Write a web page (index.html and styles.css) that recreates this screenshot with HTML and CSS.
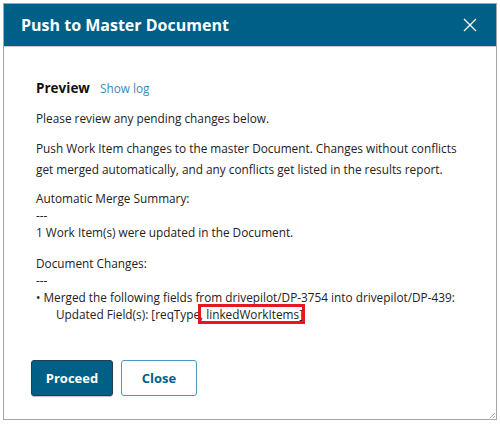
FILE: index.html
```html
<!DOCTYPE html>
<html>
<head>
<meta charset="utf-8">
<link rel="stylesheet" href="styles.css">
</head>
<body>
<div class="dialog">
  <div class="header">
    <div class="title">Push to Master Document</div>
    <svg class="close-x" width="14" height="14" viewBox="0 0 14 14"><path d="M1 1 L13 13 M13 1 L1 13" stroke="#fff" stroke-width="1.3" fill="none"/></svg>
  </div>
  <div class="content">
    <div class="heading"><span class="h-title">Preview</span><span class="link">Show log</span></div>
    <p class="p1">Please review any pending changes below.</p>
    <p class="p2">Push Work Item changes to the master Document. Changes without conflicts get merged automatically, and any conflicts get listed in the results report.</p>
    <div class="block b1">
      <div>Automatic Merge Summary:</div>
      <div>---</div>
      <div>1 Work Item(s) were updated in the Document.</div>
    </div>
    <div class="block b2">
      <div>Document Changes:</div>
      <div>---</div>
      <div class="item">• Merged the following fields from drivepilot/DP-3754 into drivepilot/DP-439:</div>
      <div class="sub">Updated Field(s): [reqType<span class="hl">, linkedWorkItems]</span></div>
    </div>
  </div>
  <div class="actions">
    <button class="btn primary">Proceed</button>
    <button class="btn secondary">Close</button>
  </div>
  <svg class="grip" width="8" height="8" viewBox="0 0 8 8"><path d="M7 2 L2 7 M7 5 L5 7" stroke="#b0b0b0" stroke-width="1" fill="none"/></svg>
</div>
</body>
</html>
```
FILE: styles.css
```css
html, body {
  margin: 0;
  padding: 0;
  background: #fff;
}
body {
  padding: 3px;
  font-family: "Open Sans", "Noto Sans", sans-serif;
  color: #222;
}
.dialog {
  position: relative;
  box-sizing: border-box;
  width: 494px;
  height: 417px;
  border: 1px solid #a6a6a6;
  background: #fff;
}
.header {
  height: 42px;
  background: #005f87;
  border-bottom: 1px solid #c9c9c9;
  display: flex;
  align-items: center;
  justify-content: space-between;
  padding: 0 19px 0 17px;
}
.title {
  color: #fff;
  font-weight: 700;
  font-size: 16px;
}
.close-x {
  display: block;
}
.content {
  padding: 31px 20px 0 32px;
  font-size: 11.8px;
}
.heading {
  display: flex;
  align-items: baseline;
  gap: 10px;
  line-height: 20px;
}
.h-title {
  font-size: 13.5px;
  font-weight: 700;
  color: #111;
}
.link {
  color: #3b8cba;
  font-size: 11.8px;
}
p {
  margin: 0;
}
.p1 {
  margin-top: 10px;
  line-height: 20px;
}
.p2 {
  margin-top: 10px;
  line-height: 21px;
}
.block {
  line-height: 17px;
}
.b1 {
  margin-top: 10px;
}
.b2 {
  margin-top: 14px;
}
.sub {
  padding-left: 20px;
}
.hl {
  outline: 3px solid #e3191f;
  outline-offset: -1px;
}
.actions {
  display: flex;
  gap: 8px;
  padding: 0 0 0 27px;
  margin-top: 37px;
}
.btn {
  height: 36px;
  font-family: "Open Sans", "Noto Sans", sans-serif;
  font-size: 13px;
  font-weight: 700;
  border-radius: 3px;
  cursor: pointer;
}
.primary {
  width: 82px;
  background: #005f87;
  color: #fff;
  border: 1px solid #1e3f52;
  box-shadow: 0 1px 1px rgba(0,0,0,0.25);
}
.secondary {
  width: 76px;
  background: #fff;
  color: #005f87;
  border: 1px solid #4c97be;
}
.grip {
  position: absolute;
  right: 0;
  bottom: 0;
}
```
